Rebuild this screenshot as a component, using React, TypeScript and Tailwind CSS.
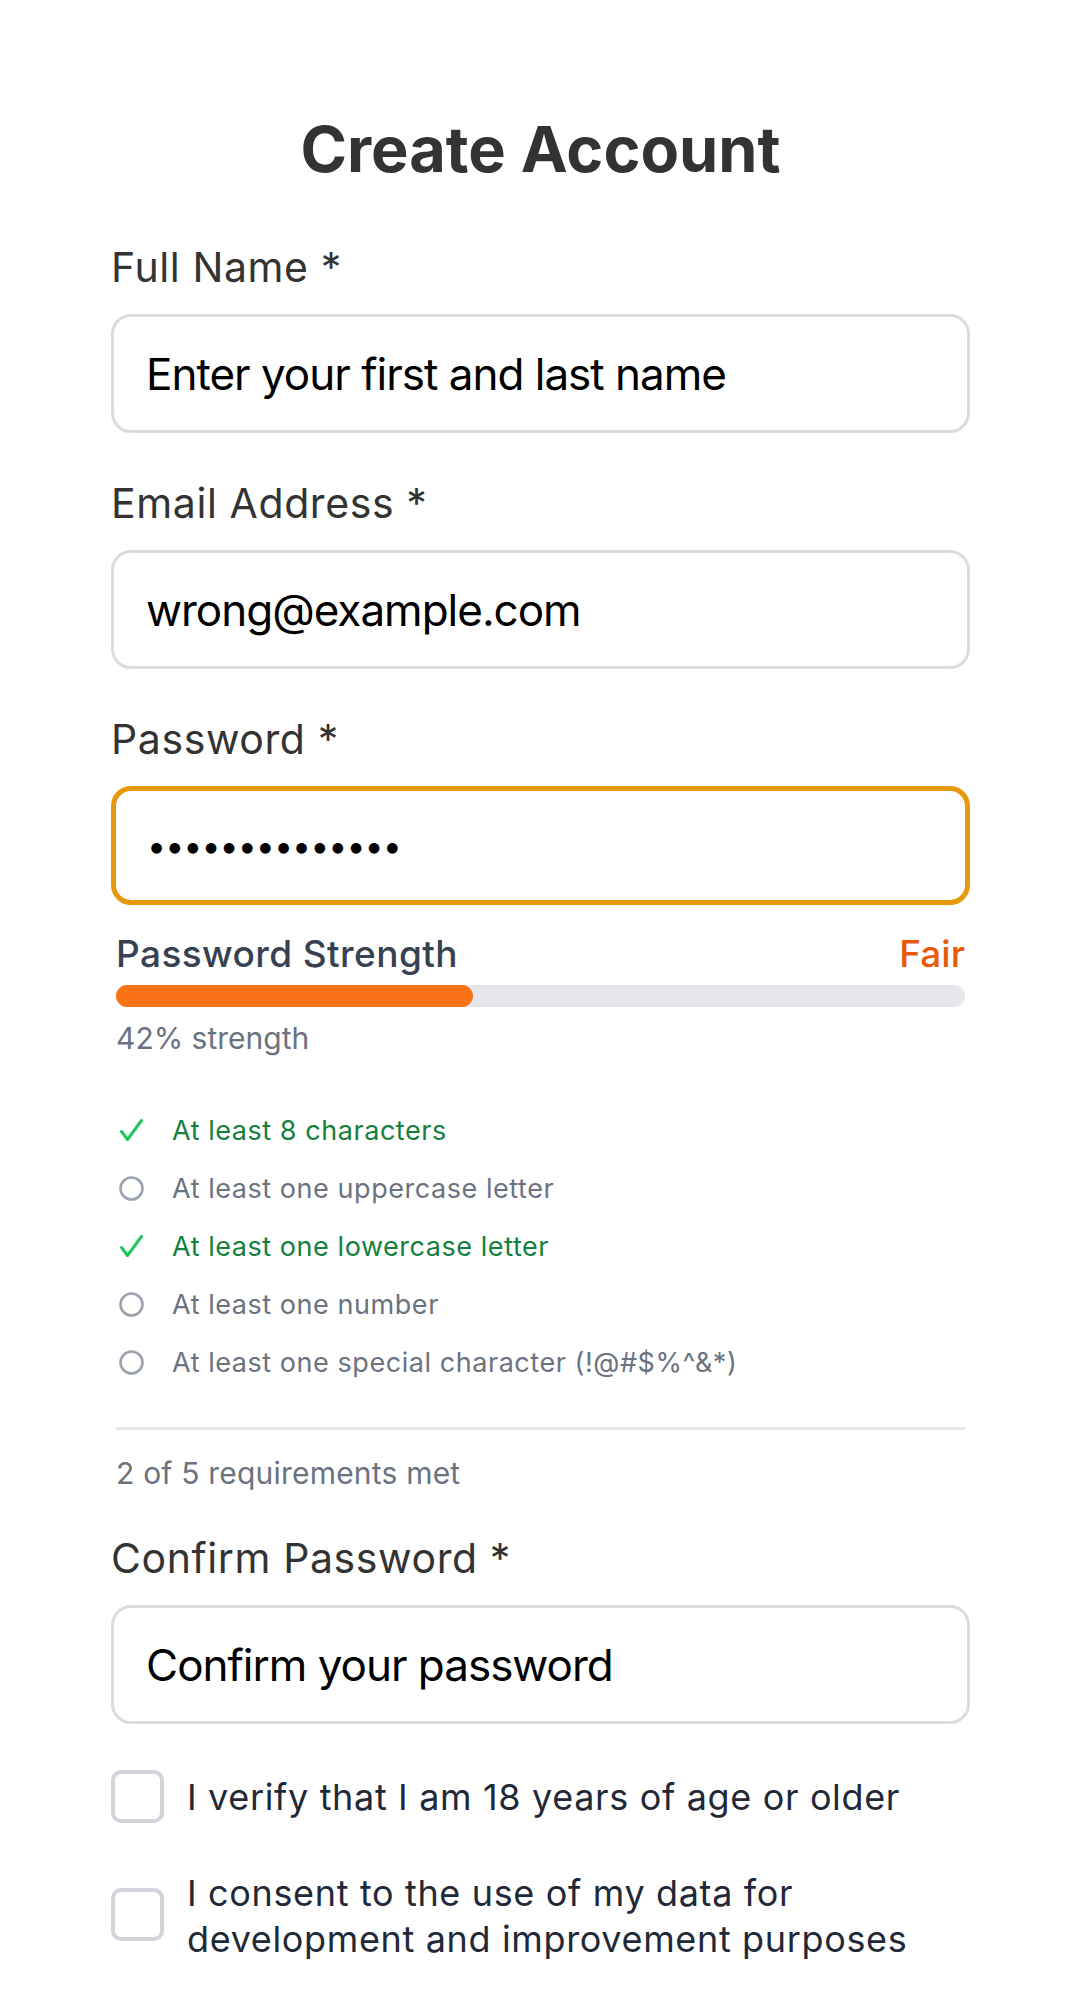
import React from 'react';

const requirements = [
  { label: 'At least 8 characters', met: true },
  { label: 'At least one uppercase letter', met: false },
  { label: 'At least one lowercase letter', met: true },
  { label: 'At least one number', met: false },
  { label: 'At least one special character (!@#$%^&*)', met: false },
];

const Field: React.FC<{
  label: string;
  className?: string;
  children: React.ReactNode;
}> = ({ label, className, children }) => (
  <div className={className}>
    <label className="block text-[41px] leading-none tracking-[0.6px] text-[#333333]">{label}</label>
    <div className="mt-[26px]">{children}</div>
  </div>
);

const inputBase =
  'block h-[119px] w-full rounded-[20px] bg-white px-[32px] text-[44px] tracking-[-1px] text-black placeholder:text-black outline-none';

const CheckIcon = () => (
  <svg width="25" height="25" viewBox="0 0 25 25" fill="none">
    <path d="M2.5 13.5 L8.5 21.5 L22.5 2.5" stroke="#22c55e" strokeWidth="3" strokeLinecap="round" strokeLinejoin="round" />
  </svg>
);

const CircleIcon = () => (
  <svg width="25" height="25" viewBox="0 0 25 25" fill="none">
    <circle cx="12.5" cy="12.5" r="11" stroke="#9ca3af" strokeWidth="2.6" />
  </svg>
);

const App: React.FC = () => {
  const met = requirements.filter((r) => r.met).length;

  return (
    <div className="min-h-screen bg-white font-['Inter',sans-serif]">
      <div className="mx-auto w-[859px] pt-[118px] pb-[40px]">
        <h1 className="text-center text-[63px] font-bold leading-none text-[#333333]">Create Account</h1>

        <Field label="Full Name *" className="mt-[66px]">
          <input className={`${inputBase} border-[3px] border-[#dcdcdc]`} placeholder="Enter your first and last name" />
        </Field>

        <Field label="Email Address *" className="mt-[50px]">
          <input className={`${inputBase} border-[3px] border-[#dcdcdc]`} defaultValue="wrong@example.com" />
        </Field>

        <Field label="Password *" className="mt-[50px]">
          <input
            type="password"
            className="block h-[119px] w-full rounded-[20px] border-[5px] border-[#e69a0b] bg-white px-[31px] text-[34px] tracking-[-1px] text-black outline-none"
            defaultValue="abcdefghijklmn"
          />
        </Field>

        <div className="mx-[5px] mt-[30px]">
          <div className="flex items-center justify-between text-[37px] font-medium leading-none">
            <span className="tracking-[0.4px] text-[#374151]">Password Strength</span>
            <span className="text-[#ea580c]">Fair</span>
          </div>
          <div className="mt-[13px] h-[22px] w-full rounded-full bg-[#e5e7eb]">
            <div className="h-full rounded-full bg-[#f97316]" style={{ width: '42%' }} />
          </div>
          <p className="mt-[16px] text-[30px] leading-none text-[#6b7280]">42% strength</p>

          <ul className="mt-[48px]">
            {requirements.map((r) => (
              <li key={r.label} className="flex h-[58px] items-center">
                <span className="ml-[3px] flex w-[25px] items-center justify-center">
                  {r.met ? <CheckIcon /> : <CircleIcon />}
                </span>
                <span
                  className={`ml-[28px] text-[27px] leading-none tracking-[0.55px] ${
                    r.met ? 'text-[#15803d]' : 'text-[#6b7280]'
                  }`}
                >
                  {r.label}
                </span>
              </li>
            ))}
          </ul>

          <div className="mt-[36px] border-t-[3px] border-[#e5e7eb]" />
          <p className="mt-[28px] text-[30px] leading-none tracking-[0.2px] text-[#6b7280]">
            {met} of 5 requirements met
          </p>
        </div>

        <Field label="Confirm Password *" className="mt-[50px]">
          <input className={`${inputBase} border-[3px] border-[#dcdcdc]`} placeholder="Confirm your password" />
        </Field>

        <div className="mt-[46px] flex flex-col gap-[47px]">
          <label className="flex items-center gap-[23px]">
            <input
              type="checkbox"
              className="h-[53px] w-[53px] shrink-0 appearance-none rounded-[10px] border-[4px] border-[#d1d5db] bg-white"
            />
            <span className="text-[36px] leading-[46px] tracking-[0.65px] text-[#1f2937]">
              I verify that I am 18 years of age or older
            </span>
          </label>
          <label className="flex items-start gap-[23px]">
            <input
              type="checkbox"
              className="mt-[18px] h-[53px] w-[53px] shrink-0 appearance-none rounded-[10px] border-[4px] border-[#d1d5db] bg-white"
            />
            <span className="text-[36px] leading-[46px] tracking-[0.65px] text-[#1f2937]">
              I consent to the use of my data for development and improvement purposes
            </span>
          </label>
        </div>
      </div>
    </div>
  );
};

export default App;
